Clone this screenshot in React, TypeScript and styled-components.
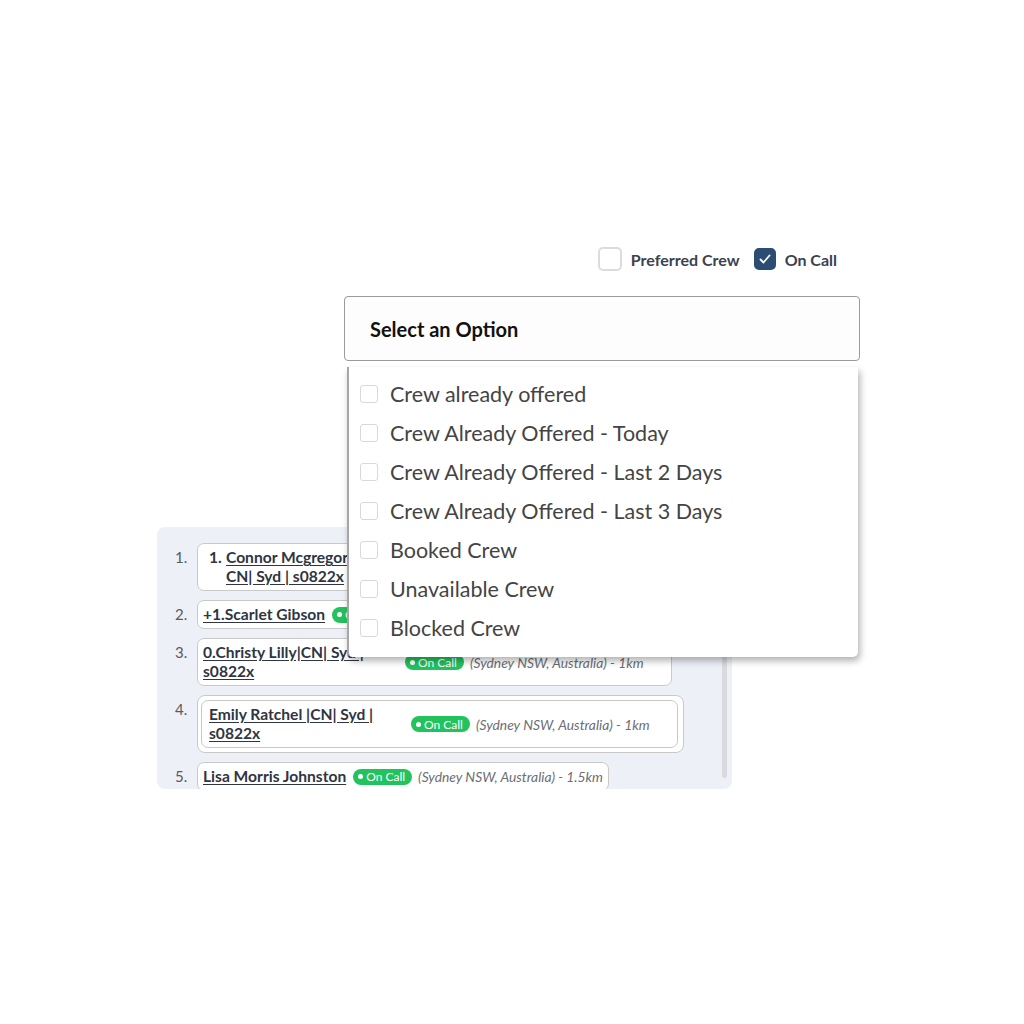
import React from 'react';
import styled, { createGlobalStyle } from 'styled-components';

const GlobalStyle = createGlobalStyle`
    body {
        margin: 0;
        background: #ffffff;
        font-family: Lato, "Noto Sans", sans-serif;
    }
`;

const Page = styled.div`
    width: 1024px;
    height: 1024px;
    padding-top: 247px;
    box-sizing: border-box;
    overflow: hidden;
`;

const FilterArea = styled.div`
    position: relative;
    z-index: 2;
    margin-left: 344px;
    width: 516px;
`;

const FilterRow = styled.div`
    display: flex;
    justify-content: flex-end;
    align-items: center;
    gap: 14px;
    padding-right: 23px;
`;

const Check = styled.label`
    display: flex;
    align-items: center;
    gap: 9px;
    font-size: 16px;
    font-weight: 700;
    color: #3b4250;
`;

const Box = styled.span<{ $checked?: boolean }>`
    width: ${({ $checked }) => ($checked ? 22 : 24)}px;
    height: ${({ $checked }) => ($checked ? 22 : 24)}px;
    box-sizing: border-box;
    border-radius: 5px;
    border: 2px solid ${({ $checked }) => ($checked ? '#2b4c73' : '#dcdcdc')};
    background: ${({ $checked }) => ($checked ? '#2b4c73' : '#fff')};
    display: flex;
    align-items: center;
    justify-content: center;
`;

const SelectBox = styled.div`
    margin-top: 25px;
    height: 65px;
    box-sizing: border-box;
    border: 1px solid #9a9a9a;
    border-radius: 4px;
    background: #fdfdfd;
    display: flex;
    align-items: center;
    padding-left: 25px;
    font-size: 20px;
    font-weight: 700;
    color: #111;
`;

const Menu = styled.div`
    position: absolute;
    top: calc(100% + 6px);
    left: 3px;
    right: 2px;
    z-index: 10;
    background: #fff;
    border-left: 2px solid #a6a6a6;
    border-radius: 0 0 5px 5px;
    box-shadow: 2px 4px 7px rgba(0, 0, 0, 0.3);
    padding: 7px 0 10px 11px;
`;

const Option = styled.div`
    height: 39px;
    display: flex;
    align-items: center;
    gap: 12px;
    font-size: 21.5px;
    color: #444;
`;

const OptionBox = styled.span`
    width: 18px;
    height: 18px;
    box-sizing: border-box;
    border: 1px solid #d9d9d9;
    border-radius: 3px;
`;

const Panel = styled.div`
    margin: 166px 0 0 157px;
    width: 575px;
    height: 262px;
    box-sizing: border-box;
    background: #eef0f8;
    border-radius: 8px;
    display: flex;
    overflow: hidden;
`;

const List = styled.div`
    flex: 1;
    display: flex;
    flex-direction: column;
    gap: 9px;
    padding: 16px 0 0 18px;
`;

const Scroll = styled.div`
    width: 5px;
    margin: 10px 5px 11px 0;
    border-radius: 3px;
    background: #d9dade;
`;

const Row = styled.div`
    display: flex;
    align-items: flex-start;
`;

const Num = styled.span`
    width: 22px;
    flex: none;
    padding-top: 5px;
    line-height: 19px;
    font-size: 15px;
    color: #555a63;
`;

const Card = styled.div<{ $width?: number; $pad?: string }>`
    display: flex;
    align-items: center;
    gap: 6px;
    width: ${({ $width }) => ($width ? `${$width}px` : 'fit-content')};
    box-sizing: border-box;
    padding: ${({ $pad }) => $pad || '4px 5px'};
    background: #fff;
    border: 1px solid #c9c9c9;
    border-radius: 7px;
`;

const Outer = styled.div`
    width: 487px;
    box-sizing: border-box;
    padding: 4px 5px 4px 3px;
    background: #fff;
    border: 1px solid #c9c9c9;
    border-radius: 8px;
`;

const Name = styled.span<{ $max?: number }>`
    max-width: ${({ $max }) => $max || 195}px;
    margin-right: 1px;
    font-size: 15.6px;
    line-height: 19px;
    font-weight: 700;
    color: #2f3542;
    text-decoration: underline;
    text-underline-offset: 2px;
`;

const Prefix = styled.span`
    flex: none;
    align-self: flex-start;
    width: 11px;
    font-size: 15.6px;
    line-height: 19px;
    font-weight: 700;
    color: #2f3542;
`;

const Badge = styled.span`
    flex: none;
    display: flex;
    align-items: center;
    gap: 3px;
    height: 16px;
    padding: 0 7px 0 5px;
    border-radius: 8px;
    background: #22c25d;
    color: #fff;
    font-size: 12px;

    &::before {
        content: '';
        width: 5px;
        height: 5px;
        border-radius: 50%;
        background: #fff;
    }
`;

const Where = styled.span`
    flex: none;
    font-size: 13.8px;
    font-style: italic;
    color: #6b6e75;
`;

const options = [
    'Crew already offered',
    'Crew Already Offered - Today',
    'Crew Already Offered - Last 2 Days',
    'Crew Already Offered - Last 3 Days',
    'Booked Crew',
    'Unavailable Crew',
    'Blocked Crew',
];

const Status: React.FC<{ km: string }> = ({ km }) => (
    <>
        <Badge>On Call</Badge>
        <Where>(Sydney NSW, Australia) - {km}</Where>
    </>
);

const App: React.FC = () => {
    return (
        <Page>
            <GlobalStyle />
            <FilterArea>
                <FilterRow>
                    <Check>
                        <Box />
                        Preferred Crew
                    </Check>
                    <Check>
                        <Box $checked>
                            <svg width="14" height="14" viewBox="0 0 14 14" fill="none">
                                <path d="M2.5 7.5l3 3 6-7" stroke="#fff" strokeWidth="1.8" strokeLinecap="round" strokeLinejoin="round" />
                            </svg>
                        </Box>
                        On Call
                    </Check>
                </FilterRow>
                <SelectBox>Select an Option</SelectBox>
                <Menu>
                    {options.map((o) => (
                        <Option key={o}>
                            <OptionBox />
                            {o}
                        </Option>
                    ))}
                </Menu>
            </FilterArea>
            <Panel>
                <List>
                    <Row>
                        <Num>1.</Num>
                        <Card $width={480} $pad="4px 5px 4px 11px">
                            <Prefix>1.</Prefix>
                            <Name $max={140}>Connor Mcgregor | CN| Syd | s0822x</Name>
                            <Status km="1km" />
                        </Card>
                    </Row>
                    <Row>
                        <Num>2.</Num>
                        <Card>
                            <Name>+1.Scarlet Gibson</Name>
                            <Status km="1km" />
                        </Card>
                    </Row>
                    <Row>
                        <Num>3.</Num>
                        <Card $width={475}>
                            <Name>0.Christy Lilly|CN| Syd | s0822x</Name>
                            <Status km="1km" />
                        </Card>
                    </Row>
                    <Row>
                        <Num>4.</Num>
                        <Outer>
                            <Card $width={477} $pad="4px 7px">
                                <Name>Emily Ratchel |CN| Syd | s0822x</Name>
                                <Status km="1km" />
                            </Card>
                        </Outer>
                    </Row>
                    <Row>
                        <Num>5.</Num>
                        <Card>
                            <Name>Lisa Morris Johnston</Name>
                            <Status km="1.5km" />
                        </Card>
                    </Row>
                </List>
                <Scroll />
            </Panel>
        </Page>
    );
};

export default App;
